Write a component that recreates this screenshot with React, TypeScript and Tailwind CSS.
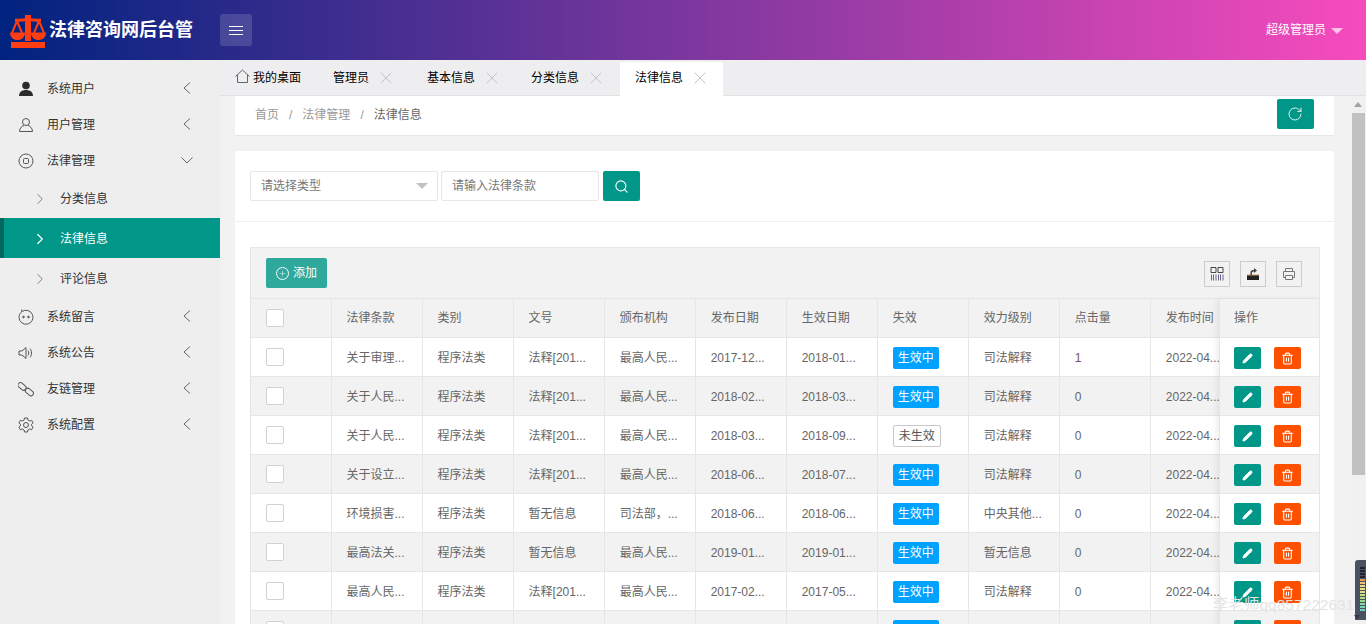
import React from 'react';
import { ChevronRight, Pencil, Plus, RotateCw, Search, Trash2, X } from 'lucide-react';

const rows = [
  { title: '关于审理...', doc: '法释[201...', org: '最高人民...', pub: '2017-12...', eff: '2018-01...', status: '生效中', level: '司法解释', hits: '1' },
  { title: '关于人民...', doc: '法释[201...', org: '最高人民...', pub: '2018-02...', eff: '2018-03...', status: '生效中', level: '司法解释', hits: '0' },
  { title: '关于人民...', doc: '法释[201...', org: '最高人民...', pub: '2018-03...', eff: '2018-09...', status: '未生效', level: '司法解释', hits: '0' },
  { title: '关于设立...', doc: '法释[201...', org: '最高人民...', pub: '2018-06...', eff: '2018-07...', status: '生效中', level: '司法解释', hits: '0' },
  { title: '环境损害...', doc: '暂无信息', org: '司法部，...', pub: '2018-06...', eff: '2018-06...', status: '生效中', level: '中央其他...', hits: '0' },
  { title: '最高法关...', doc: '暂无信息', org: '最高人民...', pub: '2019-01...', eff: '2019-01...', status: '生效中', level: '暂无信息', hits: '0' },
  { title: '最高人民...', doc: '法释[201...', org: '最高人民...', pub: '2017-02...', eff: '2017-05...', status: '生效中', level: '司法解释', hits: '0' },
  { title: '最高人民...', doc: '法释[201...', org: '最高人民...', pub: '2017-02...', eff: '2017-05...', status: '生效中', level: '司法解释', hits: '0' },
];

const headers = ['法律条款', '类别', '文号', '颁布机构', '发布日期', '生效日期', '失效', '效力级别', '点击量', '发布时间'];

const tabs = [
  { label: '管理员', width: 'w-[94px]' },
  { label: '基本信息', width: 'w-[104px]' },
  { label: '分类信息', width: 'w-[104px]' },
];

// little level meter stuck on the right edge of the page
const meterBars = [
  'bg-[#23262e]', 'bg-[#23262e]', 'bg-[#23262e]', 'bg-[#23262e]',
  'bg-[#e89a5c]', 'bg-[#ecc070]', 'bg-[#ecd874]', 'bg-[#e8e07a]', 'bg-[#dce27e]',
  'bg-[#c8e080]', 'bg-[#b0dc84]', 'bg-[#98d890]', 'bg-[#84d8a4]', 'bg-[#74d4b4]', 'bg-[#70d0c0]',
];

const Scale = () => (
  <svg width="36" height="36" viewBox="0 0 36 36" fill="none" stroke="#ff3d12" className="mt-[2px]">
    <path d="M15 2h6v26h-6z" fill="#ff3d12" stroke="none" />
    <path d="M5 7c6 1 9 0 13-1 4 1 7 2 13 1" strokeWidth="3" />
    <path d="M7 8 2 20M7 8l5 12M29 8l-5 12M29 8l5 12" strokeWidth="2" />
    <path d="M0 19.500h15c0 5-3.500 7.500-7.500 7.500S0 24.500 0 19.500zM21 19.500h15c0 5-3.500 7.500-7.500 7.500S21 24.500 21 19.500z" fill="#ff3d12" stroke="none" />
    <path d="M1 29h34v6H1z" fill="#ff3d12" stroke="none" />
  </svg>
);

const Chevron = ({ down }: { down?: boolean }) => (
  <svg width="16" height="16" viewBox="0 0 16 16" fill="none" stroke="#666" strokeWidth="1" className="-mt-[2px]">
    {down ? <path d="M2.500 5.500 8 11l5.500-5.500" /> : <path d="M11 2.500 5 8l6 5.500" />}
  </svg>
);

const icons: Record<string, React.ReactNode> = {
  solidUser: (
    <svg width="16" height="16" viewBox="0 0 16 16" fill="#2b2b2b">
      <circle cx="8" cy="4.500" r="3.800" />
      <path d="M1 15c0-4 3-6 7-6s7 2 7 6z" />
    </svg>
  ),
  user: (
    <svg width="16" height="16" viewBox="0 0 16 16" fill="none" stroke="#555" strokeWidth="1">
      <circle cx="8" cy="5" r="3.500" />
      <path d="M1.500 14.500c0-3.500 2.500-5.500 4.500-6M14.500 14.500c0-3.500-2.500-5.500-4.500-6M1.500 14.500h13" />
    </svg>
  ),
  target: (
    <svg width="16" height="16" viewBox="0 0 16 16" fill="none" stroke="#555" strokeWidth="1">
      <circle cx="8" cy="8" r="7" />
      <rect x="5.500" y="5.500" width="5" height="5" rx="1" />
    </svg>
  ),
  face: (
    <svg width="16" height="16" viewBox="0 0 16 16" fill="none" stroke="#555" strokeWidth="1">
      <path d="M4 2.500A7 7 0 1 1 1 8.500c0-2.500 1-4.500 3-6zM4 2.500 3.500 .5" />
      <circle cx="5.500" cy="8" r=".8" fill="#555" />
      <circle cx="10.500" cy="8" r=".8" fill="#555" />
    </svg>
  ),
  speaker: (
    <svg width="16" height="16" viewBox="0 0 16 16" fill="none" stroke="#555" strokeWidth="1">
      <path d="M1 6v4h3l4 3.500v-11L4 6zM10 5.500c1 1.500 1 3.500 0 5M12 3.500c2 2.500 2 6.500 0 9" />
    </svg>
  ),
  link: (
    <svg width="16" height="16" viewBox="0 0 16 16" fill="none" stroke="#555" strokeWidth="1">
      <rect x="-.2" y="2.800" width="9" height="5" rx="2.500" transform="rotate(40 4 5)" />
      <rect x="6.800" y="8.300" width="9" height="5" rx="2.500" transform="rotate(40 11 11)" />
    </svg>
  ),
  gear: (
    <svg width="16" height="16" viewBox="0 0 16 16" fill="none" stroke="#555" strokeWidth="1">
      <path d="M6.500 1h3l.4 2 1.800 1 1.900-.7 1.500 2.600-1.500 1.300v1.600l1.500 1.300-1.500 2.600-1.900-.7-1.800 1-.4 2h-3l-.4-2-1.800-1-1.900.7L.9 10.100l1.500-1.300V7.200L.9 5.900l1.500-2.600 1.900.7 1.800-1z" />
      <circle cx="8" cy="8" r="2.500" />
    </svg>
  ),
};

const MenuItem = ({ icon, label, down }: { icon: string; label: string; down?: boolean }) => (
  <div className="flex h-9 items-center pl-[18px] pr-[25px] pt-0.5 text-[#333]">
    <span className="mr-[13px] w-4">{icons[icon]}</span>
    <span className="flex-1">{label}</span>
    <Chevron down={down} />
  </div>
);

const SubItem = ({ label, active }: { label: string; active?: boolean }) => (
  <div
    className={`flex h-10 items-center pt-0.5 ${
      active ? 'border-l-4 border-[#00695f] bg-[#009688] pl-[27px] text-white' : 'pl-[31px] text-[#333]'
    }`}
  >
    <ChevronRight size={18} strokeWidth={active ? 1.600 : 1.200} className={`mr-[11px] ${active ? 'text-white' : 'text-[#777]'}`} />
    {label}
  </div>
);

const Tool = ({ children }: { children: React.ReactNode }) => (
  <div className="flex h-[26px] w-[26px] items-center justify-center border border-[#ccc]">{children}</div>
);

const App = () => {
  return (
    <div className="relative flex h-screen flex-col overflow-hidden bg-[#eeeeee] font-['Liberation_Sans','Noto_Sans_CJK_SC',sans-serif] text-xs">
      <header className="flex h-[60px] shrink-0 items-center bg-linear-to-r/srgb from-[#00237f] to-[#f74bbd] pl-[10px] pr-[23px] text-white">
        <Scale />
        <span className="ml-[3px] w-[171px] text-lg font-bold">法律咨询网后台管</span>
        <button className="flex h-8 w-8 items-center justify-center rounded-[3px] bg-white/15">
          <svg width="16" height="12" viewBox="0 0 16 12" stroke="white" strokeWidth="1">
            <path d="M1 2.500h14M1 6.500h14M1 10.500h14" />
          </svg>
        </button>
        <span className="ml-auto">超级管理员</span>
        <span className="ml-[5px] mt-[2px] h-0 w-0 border-x-[6px] border-t-[6px] border-x-transparent border-t-[#ffc4ea]" />
      </header>

      <div className="flex min-h-0 flex-1">
        <aside className="w-[220px] shrink-0 pt-[10px]">
          <MenuItem icon="solidUser" label="系统用户" />
          <MenuItem icon="user" label="用户管理" />
          <MenuItem icon="target" label="法律管理" down />
          <SubItem label="分类信息" />
          <SubItem label="法律信息" active />
          <SubItem label="评论信息" />
          <MenuItem icon="face" label="系统留言" />
          <MenuItem icon="speaker" label="系统公告" />
          <MenuItem icon="link" label="友链管理" />
          <MenuItem icon="gear" label="系统配置" />
        </aside>

        <main className="flex min-w-0 flex-1 flex-col">
          <nav className="flex h-9 shrink-0 border-b border-[#e2e2e2] bg-[#eeeef0] text-black">
            <div className="flex w-[98px] items-center pl-[15px]">
              <svg width="15" height="15" viewBox="0 0 15 15" fill="none" stroke="#666" strokeWidth="1" className="-mt-[2px] mr-[3px]">
                <path d="M.5 7.500 7.500 1l7 6.500M2.500 6v7.500h10V6" />
              </svg>
              我的桌面
            </div>
            {tabs.map((tab) => (
              <div key={tab.label} className={`flex items-center pl-[15px] ${tab.width}`}>
                {tab.label}
                <X size={20} strokeWidth={1.200} className="ml-[7px] text-[#c4c4c4]" />
              </div>
            ))}
            <div className="mt-[2px] flex h-[34px] w-[103px] items-center bg-white pb-[2px] pl-[15px]">
              法律信息
              <X size={20} strokeWidth={1.200} className="ml-[7px] text-[#c4c4c4]" />
            </div>
          </nav>

          <div className="flex min-h-0 flex-1">
            <div className="min-w-0 flex-1 overflow-hidden bg-[#f2f2f2] pl-[15px] pr-4">
              <div className="flex h-10 items-center border-b border-[#e6e6e6] bg-white pb-[2px] pl-5 pr-5 text-[#999]">
                <span>首页</span>
                <span className="mx-[10px]">/</span>
                <span>法律管理</span>
                <span className="mx-[10px]">/</span>
                <span className="text-[#666]">法律信息</span>
                <button className="-mt-px ml-auto flex h-[30px] w-[37px] items-center justify-center rounded-[2px] bg-[#009688]">
                  <RotateCw size={16} className="mr-[2px] text-white" strokeWidth={1.300} />
                </button>
              </div>

              <div className="mt-[15px] rounded-[2px] bg-white">
                <div className="flex h-[71px] items-start gap-[3px] border-b border-[#eeeeee] pl-[15px] pt-5">
                  <div className="flex h-[30px] w-[188px] items-center justify-between rounded-[2px] border border-[#e6e6e6] pl-[10px] pr-[9px] text-[#777]">
                    请选择类型
                    <span className="h-0 w-0 border-x-[6px] border-t-[6px] border-x-transparent border-t-[#c2c2c2]" />
                  </div>
                  <div className="flex h-[30px] w-[158px] items-center rounded-[2px] border border-[#e6e6e6] pl-[10px] text-[#777]">
                    请输入法律条款
                  </div>
                  <button className="ml-px flex h-[30px] w-[37px] items-center justify-center rounded-[2px] bg-[#009688]">
                    <Search size={15} className="text-white" strokeWidth={1.800} />
                  </button>
                </div>

                <div className="ml-[15px] mr-[14px] mt-[25px] border border-[#e6e6e6] text-[#666]">
                  <div className="flex h-[51px] items-center justify-between border-b border-[#e6e6e6] bg-[#f2f2f2] pl-[15px] pr-[17px]">
                    <button className="flex h-[30px] w-[61px] items-center justify-center gap-1 rounded-[2px] bg-[#2ea99c] text-white">
                      <span className="flex h-[13px] w-[13px] items-center justify-center rounded-full border border-white">
                        <Plus size={9} strokeWidth={1.200} />
                      </span>
                      添加
                    </button>
                    <div className="mt-[2px] flex gap-[10px]">
                      <Tool>
                        <svg width="14" height="14" viewBox="0 0 14 14" fill="none" stroke="#444">
                          <path d="M1 .5h5v5H1zM8 .5h5v5H8z" />
                          <path d="M1.500 7.500v6M3.500 7.500v6M6 7.500v6M8.500 7.500v6M10.500 7.500v6M13 7.500v6" stroke="#668" />
                        </svg>
                      </Tool>
                      <Tool>
                        <svg width="14" height="14" viewBox="0 0 14 14">
                          <path d="M1 8h12v5H1z" fill="#222" />
                          <path d="M1 8h12" stroke="#c96" />
                          <path d="M4.500 8V5C4.500 3.500 6 3 8 3V1l3 2.500L8 6V4.500c-1 0-2 .5-2 1.500v2z" fill="#444" />
                        </svg>
                      </Tool>
                      <Tool>
                        <svg width="14" height="14" viewBox="0 0 14 14" fill="none" stroke="#777">
                          <path d="M3.500 4V1.500h7V4M3.500 10.500H1.500V4.500h11v6h-2M3.500 8.500h7v4h-7z" />
                        </svg>
                      </Tool>
                    </div>
                  </div>

                  <div className="flex h-[500px]">
                    <div className="min-w-0 flex-1 overflow-hidden">
                      <table className="w-[991px] table-fixed border-collapse">
                        <colgroup>
                          <col className="w-[80px]" />
                          <col className="w-[91px]" span={10} />
                        </colgroup>
                        <thead>
                          <tr className="h-[38px] bg-[#f2f2f2]">
                            <th className="border-b border-r border-[#e6e6e6] pl-[15px] text-left">
                              <span className="block h-[18px] w-[18px] rounded-[2px] border border-[#d2d2d2] bg-white" />
                            </th>
                            {headers.map((h) => (
                              <th key={h} className="truncate border-b border-r border-[#e6e6e6] px-[15px] text-left font-normal">
                                {h}
                              </th>
                            ))}
                          </tr>
                        </thead>
                        <tbody>
                          {rows.map((row, i) => (
                            <tr key={i} className={`h-[39px] [&>td]:pt-0.5 ${i % 2 === 1 ? 'bg-[#f2f2f2]' : 'bg-white'}`}>
                              <td className="border-b border-r border-[#e6e6e6] pl-[15px] [&]:!pt-0">
                                <span className="block h-[18px] w-[18px] rounded-[2px] border border-[#d2d2d2] bg-white" />
                              </td>
                              <td className="border-b border-r border-[#e6e6e6] px-[15px]">{row.title}</td>
                              <td className="border-b border-r border-[#e6e6e6] px-[15px]">程序法类</td>
                              <td className="border-b border-r border-[#e6e6e6] px-[15px]">{row.doc}</td>
                              <td className="border-b border-r border-[#e6e6e6] px-[15px]">{row.org}</td>
                              <td className="border-b border-r border-[#e6e6e6] px-[15px]">{row.pub}</td>
                              <td className="border-b border-r border-[#e6e6e6] px-[15px]">{row.eff}</td>
                              <td className="border-b border-r border-[#e6e6e6] pl-[15px]">
                                <span
                                  className={`flex h-[22px] items-center justify-center rounded-[2px] ${
                                    row.status === '生效中' ? 'w-[46px] bg-[#00a2ff] text-white' : 'w-[48px] border border-[#c9c9c9] bg-white text-[#555]'
                                  }`}
                                >
                                  {row.status}
                                </span>
                              </td>
                              <td className="border-b border-r border-[#e6e6e6] px-[15px]">{row.level}</td>
                              <td className={`border-b border-r border-[#e6e6e6] px-[15px] ${row.hits === '1' ? 'text-[#7a5060]' : ''}`}>{row.hits}</td>
                              <td className="border-b border-r border-[#e6e6e6] pl-[15px]">2022-04...</td>
                            </tr>
                          ))}
                        </tbody>
                      </table>
                    </div>

                    <div className="w-[100px] shrink-0 border-l border-[#e6e6e6] shadow-[-3px_0_6px_rgba(0,0,0,0.06)]">
                      <div className="flex h-[39px] items-center border-b border-[#e6e6e6] bg-[#f2f2f2] pl-[14px]">操作</div>
                      {rows.map((_, i) => (
                        <div
                          key={i}
                          className={`flex h-[39px] items-center gap-[13px] border-b border-[#e6e6e6] pl-[14px] pt-0.5 ${
                            i % 2 === 1 ? 'bg-[#f2f2f2]' : 'bg-white'
                          }`}
                        >
                          <span className="flex h-[22px] w-[27px] items-center justify-center rounded-[2px] bg-[#009688]">
                            <Pencil size={11} className="text-white" fill="white" />
                          </span>
                          <span className="flex h-[22px] w-[27px] items-center justify-center rounded-[2px] bg-[#ff5000]">
                            <Trash2 size={13} className="text-white" />
                          </span>
                        </div>
                      ))}
                    </div>
                  </div>
                </div>
              </div>
            </div>

            <div className="flex w-4 shrink-0 flex-col items-center bg-[#f1f1f1]">
              <span className="mt-[6px] h-0 w-0 border-x-[4px] border-b-[5px] border-x-transparent border-b-[#a3a3a3]" />
              <div className="mt-[6px] h-[362px] w-[13px] bg-[#c1c1c1]" />
            </div>
          </div>
        </main>
      </div>

      <div className="absolute right-0 top-[560px] flex h-[60px] w-[11px] flex-col gap-[1px] rounded-tl-[3px] bg-[#4a5160] pl-[5px] pt-[7px]">
        {meterBars.map((bar, i) => (
          <span key={i} className={`h-[2px] w-[5px] ${bar}`} />
        ))}
      </div>
      <span className="absolute left-[1354px] top-[615px] h-0 w-0 border-x-[3px] border-t-[4px] border-x-transparent border-t-[#333844]" />
      <div className="absolute left-[1213px] top-[595px] text-[15.5px] leading-5 text-[#e4e4e4]">李老师qq857222631</div>
    </div>
  );
};

export default App;
